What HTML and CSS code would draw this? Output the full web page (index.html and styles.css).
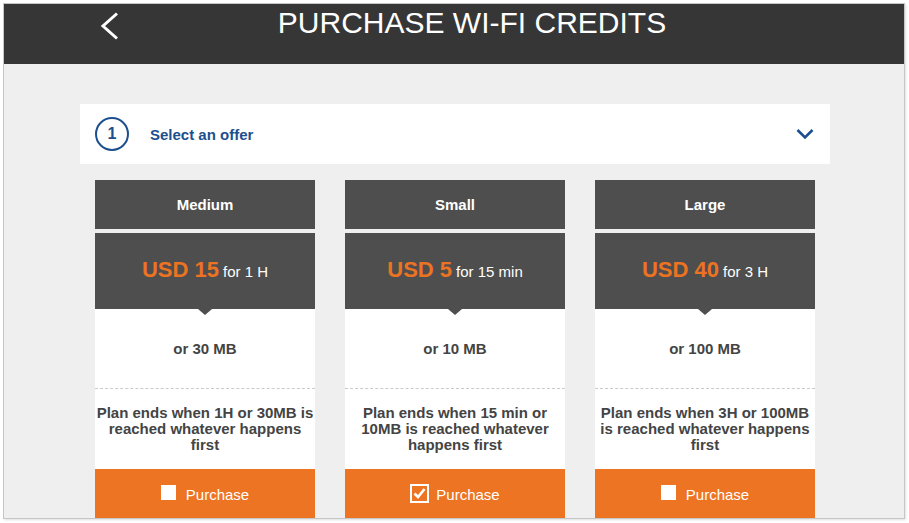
FILE: index.html
```html
<!DOCTYPE html>
<html lang="en">
<head>
<meta charset="utf-8">
<title>Purchase Wi-Fi Credits</title>
<link rel="stylesheet" href="styles.css">
</head>
<body>
<div class="frame">
  <header class="topbar">
    <button class="back" aria-label="Back">
      <svg width="20" height="28" viewBox="0 0 20 28"><polyline points="17,1.5 3,14 17,26.5" fill="none" stroke="#fff" stroke-width="3"/></svg>
    </button>
    <h1 class="title">PURCHASE WI-FI CREDITS</h1>
  </header>
  <main class="content">
    <section class="step">
      <span class="step-num">1</span>
      <span class="step-label">Select an offer</span>
      <svg class="step-chevron" width="18" height="12" viewBox="0 0 18 12"><polyline points="1.5,2 9,9.5 16.5,2" fill="none" stroke="#1c4f8e" stroke-width="2.6"/></svg>
    </section>
    <div class="offers">
      <article class="offer">
        <div class="offer-name">Medium</div>
        <div class="offer-price"><span class="amount">USD 15</span> <span class="duration">for 1 H</span></div>
        <div class="offer-data">or 30 MB</div>
        <div class="offer-desc">Plan ends when 1H or 30MB is reached whatever happens first</div>
        <button class="offer-buy"><span class="check"></span>Purchase</button>
      </article>
      <article class="offer">
        <div class="offer-name">Small</div>
        <div class="offer-price"><span class="amount">USD 5</span> <span class="duration">for 15 min</span></div>
        <div class="offer-data">or 10 MB</div>
        <div class="offer-desc">Plan ends when 15 min or 10MB is reached whatever happens first</div>
        <button class="offer-buy"><span class="check checked"><svg width="15" height="15" viewBox="0 0 15 15"><polyline points="2.5,7.5 6,11 12.5,3" fill="none" stroke="#fff" stroke-width="2.6"/></svg></span>Purchase</button>
      </article>
      <article class="offer">
        <div class="offer-name">Large</div>
        <div class="offer-price"><span class="amount">USD 40</span> <span class="duration">for 3 H</span></div>
        <div class="offer-data">or 100 MB</div>
        <div class="offer-desc">Plan ends when 3H or 100MB is reached whatever happens first</div>
        <button class="offer-buy"><span class="check"></span>Purchase</button>
      </article>
    </div>
  </main>
</div>
</body>
</html>
```
FILE: styles.css
```css
* { box-sizing: border-box; }
body {
  margin: 0;
  background: #fff;
  font-family: "Liberation Sans", Arial, sans-serif;
}
.frame {
  margin: 3px;
  width: 902px;
  height: 516px;
  border: 1px solid #c6c6c6;
  background: #efefef;
  overflow: hidden;
  box-shadow: 1px 1px 2px rgba(0,0,0,0.12);
}
.topbar {
  height: 60px;
  background: #363636;
  display: flex;
  align-items: flex-start;
  padding: 0 92px;
}
.back {
  width: 36px;
  height: 40px;
  padding: 8px 0 0 4px;
  border: 0;
  background: none;
  display: flex;
  align-items: flex-start;
}
.title {
  flex: 1;
  margin: 0;
  text-align: center;
  color: #fff;
  font-weight: normal;
  font-size: 30px;
  line-height: 38px;
}
.content {
  padding: 40px 74px 0 76px;
}
.step {
  height: 60px;
  background: #fff;
  display: flex;
  align-items: center;
  padding: 0 16px 0 15px;
}
.step-num {
  width: 34px;
  height: 34px;
  border: 2px solid #1c4f8e;
  border-radius: 50%;
  display: flex;
  align-items: center;
  justify-content: center;
  color: #1c4f8e;
  font-weight: bold;
  font-size: 16px;
}
.step-label {
  flex: 1;
  margin-left: 21px;
  color: #1c4f8e;
  font-weight: bold;
  font-size: 15px;
}
.offers {
  margin-top: 16px;
  padding: 0 15px;
  display: grid;
  grid-template-columns: repeat(3, 220px);
  column-gap: 30px;
}
.offer {
  display: flex;
  flex-direction: column;
}
.offer-name {
  height: 49px;
  background: #4e4e4e;
  color: #fff;
  font-weight: bold;
  font-size: 15px;
  display: flex;
  align-items: center;
  justify-content: center;
  margin-bottom: 4px;
}
.offer-price {
  position: relative;
  height: 76px;
  background: #4e4e4e;
  display: flex;
  justify-content: center;
  gap: 4px;
  align-items: baseline;
  padding-top: 24px;
}
.offer-price::after {
  content: "";
  position: absolute;
  left: 50%;
  bottom: -6px;
  margin-left: -7px;
  border-top: 6px solid #4e4e4e;
  border-left: 7px solid transparent;
  border-right: 7px solid transparent;
}
.amount {
  color: #eb7321;
  font-weight: bold;
  font-size: 22px;
}
.duration {
  color: #fff;
  font-size: 15px;
}
.offer-data {
  height: 80px;
  background: #fff;
  color: #444;
  font-weight: bold;
  font-size: 15px;
  display: flex;
  align-items: center;
  justify-content: center;
  border-bottom: 1px dashed #cacaca;
}
.offer-desc {
  height: 80px;
  background: #fff;
  color: #444;
  font-weight: bold;
  font-size: 15px;
  line-height: 16px;
  text-align: center;
  display: flex;
  align-items: center;
  justify-content: center;
  padding: 0 1px;
}
.offer-buy {
  height: 50px;
  border: 0;
  background: #ec7423;
  color: #fff;
  font-family: inherit;
  font-size: 15px;
  display: flex;
  align-items: center;
  justify-content: center;
  padding: 0;
}
.check {
  width: 15px;
  height: 15px;
  background: #fff;
  margin-right: 10px;
  margin-top: -4px;
}
.check.checked {
  width: 19px;
  height: 19px;
  background: none;
  border: 2px solid #fff;
  margin-right: 7px;
  margin-top: -2px;
  display: flex;
  align-items: center;
  justify-content: center;
}
```
